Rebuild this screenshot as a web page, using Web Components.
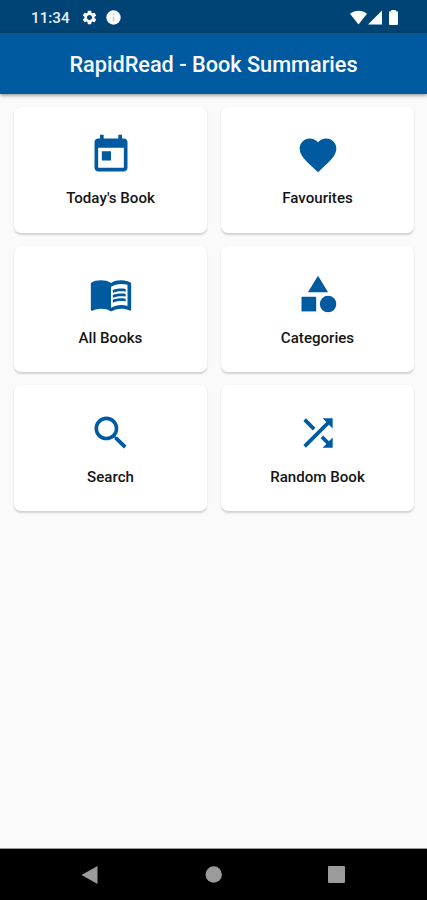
<!DOCTYPE html>
<html lang="en">
<head>
<meta charset="utf-8">
<title>RapidRead - Book Summaries</title>
<style>
    body {
        margin: 0;
        font-family: Roboto, sans-serif;
    }
</style>
</head>
<body>
<rapid-app></rapid-app>
<script>
const icons = {
    today: `<path d="M19 3h-1V1h-2v2H8V1H6v2H5c-1.11 0-1.99.9-1.99 2L3 19c0 1.1.89 2 2 2h14c1.1 0 2-.9 2-2V5c0-1.1-.9-2-2-2zm0 16H5V8h14v11zM7 10h5v5H7z"/>`,
    heart: `<path d="M12 21.35l-1.45-1.32C5.4 15.36 2 12.28 2 8.5 2 5.42 4.42 3 7.5 3c1.74 0 3.41.81 4.5 2.09C13.09 3.81 14.76 3 16.5 3 19.58 3 22 5.42 22 8.5c0 3.78-3.4 6.86-8.55 11.54L12 21.35z"/>`,
    book: `<path d="M21 5c-1.11-.35-2.33-.5-3.5-.5-1.95 0-4.05.4-5.5 1.5-1.45-1.1-3.55-1.5-5.5-1.5S2.45 4.9 1 6v14.65c0 .25.25.5.5.5.1 0 .15-.05.25-.05C3.1 20.45 5.05 20 6.5 20c1.95 0 4.05.4 5.5 1.5 1.35-.85 3.8-1.5 5.5-1.5 1.65 0 3.35.3 4.75 1.05.1.05.15.05.25.05.25 0 .5-.25.5-.5V6c-.6-.45-1.25-.75-2-1zm0 13.5c-1.1-.35-2.3-.5-3.5-.5-1.7 0-4.15.65-5.5 1.5V8c1.35-.85 3.8-1.5 5.5-1.5 1.2 0 2.4.15 3.5.5v11.5z"/>
        <path d="M17.5 10.5c.88 0 1.73.09 2.5.26V9.24c-.79-.15-1.64-.24-2.5-.24-1.7 0-3.24.29-4.5.83v1.66c1.13-.64 2.7-.99 4.5-.99zM13 12.49v1.66c1.13-.64 2.7-.99 4.5-.99.88 0 1.73.09 2.5.26V11.9c-.79-.15-1.64-.24-2.5-.24-1.7 0-3.24.3-4.5.83zM17.5 14.33c-1.7 0-3.24.29-4.5.83v1.66c1.13-.64 2.7-.99 4.5-.99.88 0 1.73.09 2.5.26v-1.52c-.79-.16-1.64-.24-2.5-.24z"/>`,
    category: `<path d="M12 2l-5.5 9h11z"/><circle cx="17.5" cy="17.5" r="4.5"/><path d="M3 13.5h8v8H3z"/>`,
    search: `<path d="M15.5 14h-.79l-.28-.27C15.41 12.59 16 11.11 16 9.5 16 5.91 13.09 3 9.5 3S3 5.91 3 9.5 5.91 16 9.5 16c1.61 0 3.09-.59 4.23-1.57l.27.28v.79l5 4.99L20.49 19l-4.99-5zm-6 0C7.01 14 5 11.99 5 9.5S7.01 5 9.5 5 14 7.01 14 9.5 11.99 14 9.5 14z"/>`,
    shuffle: `<path d="M10.59 9.17L5.41 4 4 5.41l5.17 5.17 1.42-1.41zM14.5 4l2.04 2.04L4 18.59 5.41 20 17.96 7.46 20 9.5V4h-5.5zm.33 9.41l-1.41 1.41 3.13 3.13L14.5 20H20v-5.5l-2.04 2.04-3.13-3.13z"/>`
};

class StatusBar extends HTMLElement {
    constructor() {
        super();
        this.attachShadow({mode: "open"}).innerHTML = `
            <style>
                :host {
                    display: flex;
                    align-items: center;
                    box-sizing: border-box;
                    height: 33px;
                    padding: 2px 29px 0 31px;
                    background: #004475;
                    color: #e8eef6;
                    font-size: 15.2px;
                    font-weight: 500;
                }
                span {
                    padding-top: 1px;
                }
                svg {
                    display: block;
                    fill: #fff;
                }
                .gear {
                    margin-left: 11px;
                }
                .info {
                    margin-left: 8px;
                }
                .wifi {
                    margin-left: auto;
                }
                .signal {
                    margin-left: 1px;
                }
                .battery {
                    margin-left: 7px;
                }
            </style>
            <span>11:34</span>
            <svg class="gear" width="17" height="17" viewBox="0 0 24 24"><path d="M19.14 12.94c.04-.3.06-.61.06-.94 0-.32-.02-.64-.07-.94l2.03-1.58c.18-.14.23-.41.12-.61l-1.92-3.32c-.12-.22-.37-.29-.59-.22l-2.39.96c-.5-.38-1.03-.7-1.62-.94l-.36-2.54c-.04-.24-.24-.41-.48-.41h-3.84c-.24 0-.43.17-.47.41l-.36 2.54c-.59.24-1.13.57-1.62.94l-2.39-.96c-.22-.08-.47 0-.59.22L2.74 8.87c-.12.21-.08.47.12.61l2.03 1.58c-.05.3-.09.63-.09.94s.02.64.07.94l-2.03 1.58c-.18.14-.23.41-.12.61l1.92 3.32c.12.22.37.29.59.22l2.39-.96c.5.38 1.03.7 1.62.94l.36 2.54c.05.24.24.41.48.41h3.84c.24 0 .44-.17.47-.41l.36-2.54c.59-.24 1.13-.56 1.62-.94l2.39.96c.22.08.47 0 .59-.22l1.92-3.32c.12-.22.07-.47-.12-.61l-2.01-1.58zM12 15.6c-1.98 0-3.6-1.62-3.6-3.6s1.62-3.6 3.6-3.6 3.6 1.62 3.6 3.6-1.62 3.6-3.6 3.6z"/></svg>
            <svg class="info" width="15" height="15" viewBox="0 0 15 15"><circle cx="7.5" cy="7.5" r="7.2"/><path fill="#b9cbdc" d="M6.8 3.6h1.4v1.5H6.8zM6.8 6.4h1.4v5H6.8z"/></svg>
            <svg class="wifi" width="17" height="15" viewBox="0 0 17 15"><path d="M0 3.8C4.8-.4 12.2-.4 17 3.8L8.5 14.5z"/></svg>
            <svg class="signal" width="14" height="15" viewBox="0 0 14 15"><path d="M14 .5v14H0z"/></svg>
            <svg class="battery" width="9" height="15" viewBox="0 0 9 15"><path d="M2.200 0h4.600v1.300H8q1 0 1 1V14q0 1-1 1H1q-1 0-1-1V2.300q0-1 1-1h1.200z"/></svg>`;
    }
}

class AppHeader extends HTMLElement {
    constructor() {
        super();
        this.attachShadow({mode: "open"}).innerHTML = `
            <style>
                :host {
                    display: flex;
                    align-items: center;
                    justify-content: center;
                    box-sizing: border-box;
                    height: 61px;
                    padding-top: 2px;
                    background: #005a9f;
                    color: #f8faff;
                    font-size: 21.7px;
                    font-weight: 500;
                    box-shadow: 0 1px 4px rgba(0, 0, 0, 0.5);
                }
            </style>
            <slot></slot>`;
    }
}

class MenuCard extends HTMLElement {
    constructor() {
        super();
        this.attachShadow({mode: "open"});
    }

    connectedCallback() {
        this.shadowRoot.innerHTML = `
            <style>
                :host {
                    display: flex;
                    flex-direction: column;
                    align-items: center;
                    box-sizing: border-box;
                    padding-top: 26px;
                    border-radius: 7px;
                    background: #fff;
                    box-shadow: 0 1.5px 2px rgba(0, 0, 0, 0.16);
                    color: #151515;
                    font-size: 15.1px;
                    font-weight: 500;
                    line-height: 20px;
                }
                svg {
                    display: block;
                    width: 44px;
                    height: 44px;
                    margin-bottom: 11.4px;
                    fill: #005a9f;
                }
            </style>
            <svg viewBox="0 0 24 24">${icons[this.getAttribute("icon")]}</svg>
            <span><slot></slot></span>`;
    }
}

class NavBar extends HTMLElement {
    constructor() {
        super();
        this.attachShadow({mode: "open"}).innerHTML = `
            <style>
                :host {
                    display: flex;
                    align-items: center;
                    justify-content: space-between;
                    box-sizing: border-box;
                    height: 52px;
                    padding: 0 82px 0 81px;
                    border-top: 1px solid #9c9c9c;
                    background: #000;
                }
                svg {
                    display: block;
                    fill: #9b9b9b;
                }
            </style>
            <svg width="17" height="18" viewBox="0 0 17 18"><path d="M16.5 0v18L.5 9z"/></svg>
            <svg width="17" height="17" viewBox="0 0 17 17"><circle cx="8.7" cy="8.5" r="8.2"/></svg>
            <svg width="17" height="17" viewBox="0 0 17 17"><rect width="17" height="17" rx="1"/></svg>`;
    }
}

class RapidApp extends HTMLElement {
    constructor() {
        super();
        this.attachShadow({mode: "open"}).innerHTML = `
            <style>
                :host {
                    display: flex;
                    flex-direction: column;
                    height: 900px;
                    background: #fafafa;
                }
                main {
                    flex: 1;
                    display: grid;
                    grid-template-columns: 1fr 1fr;
                    grid-auto-rows: 126px;
                    align-content: start;
                    gap: 13.2px 14px;
                    padding: 13px 13px 0 14px;
                }
            </style>
            <status-bar></status-bar>
            <app-header>RapidRead - Book Summaries</app-header>
            <main>
                <menu-card icon="today">Today's Book</menu-card>
                <menu-card icon="heart">Favourites</menu-card>
                <menu-card icon="book">All Books</menu-card>
                <menu-card icon="category">Categories</menu-card>
                <menu-card icon="search">Search</menu-card>
                <menu-card icon="shuffle">Random Book</menu-card>
            </main>
            <nav-bar></nav-bar>`;
    }
}

customElements.define("status-bar", StatusBar);
customElements.define("app-header", AppHeader);
customElements.define("menu-card", MenuCard);
customElements.define("nav-bar", NavBar);
customElements.define("rapid-app", RapidApp);
</script>
</body>
</html>
